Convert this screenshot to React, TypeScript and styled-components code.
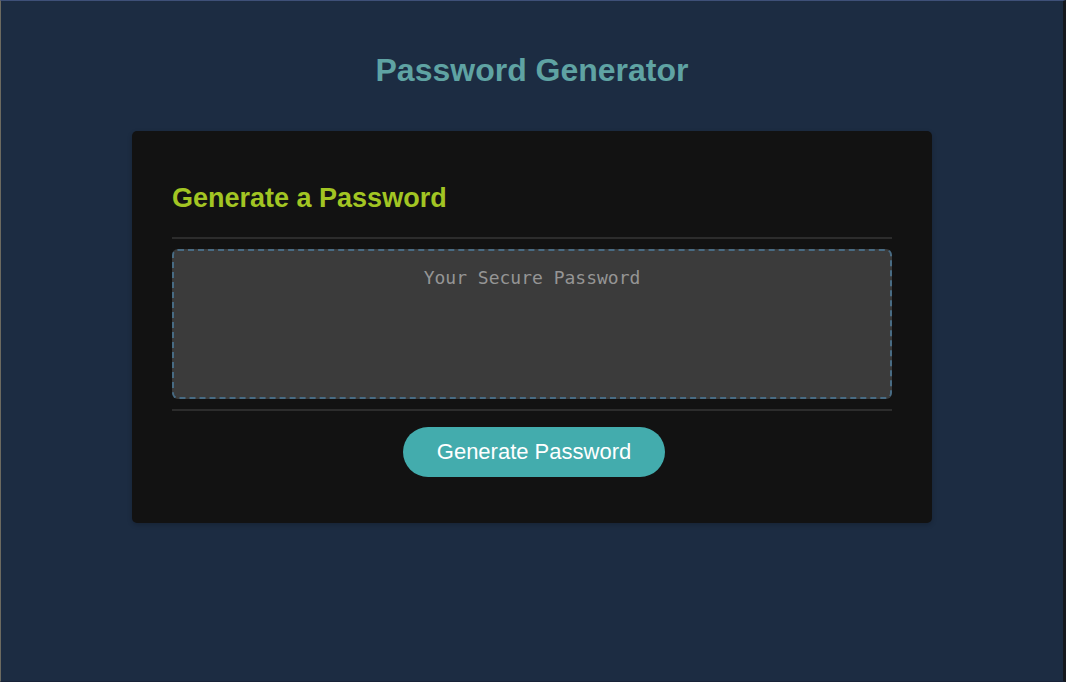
import React from "react";
import styled, { createGlobalStyle } from "styled-components";

const GlobalStyle = createGlobalStyle`
  *, *::before, *::after { box-sizing: border-box; }
  html, body { margin: 0; }
  body {
    background: #1c2c42;
    font-family: "Liberation Sans", Arial, sans-serif;
  }
`;

const Page = styled.div`
  display: flex;
  flex-direction: column;
  min-height: 100vh;
  border: 1px solid #3e5078;
  border-left-color: #6c6a60;
  border-right: 3px solid #15181d;
  border-bottom-color: #182338;
`;

const Header = styled.header`
  padding: 50px 20px 22px;
  text-align: center;
`;

const PageTitle = styled.h1`
  margin: 0;
  color: #5fa3a3;
  font-size: 32px;
  line-height: 38px;
`;

const Card = styled.main`
  width: calc(100% - 40px);
  max-width: 800px;
  margin: 20px auto;
  padding: 40px;
  border-radius: 5px;
  background: #121212;
  box-shadow: 0 2px 5px rgba(0, 0, 0, 0.2);
`;

const CardTitle = styled.h2`
  margin: 11px 0 23px;
  color: #a2c523;
  font-size: 27px;
  line-height: 32px;
`;

const CardBody = styled.div`
  padding: 10px 0;
  border: solid #2c2c2c;
  border-width: 2px 0;
`;

const PasswordBox = styled.textarea`
  display: block;
  width: 100%;
  height: 150px;
  padding: 15px 20px;
  border: 2px dashed #486b83;
  border-radius: 6px;
  resize: none;
  background: #3b3b3b;
  color: #eeeeee;
  text-align: center;
  font-family: "DejaVu Sans Mono", monospace;
  font-size: 18px;
  line-height: 24px;
  &::placeholder { color: #959595; opacity: 1; }
`;

const CardFooter = styled.div`
  display: flex;
  justify-content: center;
  padding: 16px 0 6px 4px;
`;

const GenerateButton = styled.button`
  height: 50px;
  padding: 0 34px;
  border: 0;
  border-radius: 25px;
  background: #43acad;
  color: #ffffff;
  font-family: inherit;
  font-size: 22px;
  cursor: pointer;
`;

export default function App() {
  return (
    <Page>
      <GlobalStyle />
      <Header>
        <PageTitle>Password Generator</PageTitle>
      </Header>
      <Card>
        <CardTitle>Generate a Password</CardTitle>
        <CardBody>
          <PasswordBox readOnly placeholder="Your Secure Password" aria-label="Generated Password" />
        </CardBody>
        <CardFooter>
          <GenerateButton type="button">Generate Password</GenerateButton>
        </CardFooter>
      </Card>
    </Page>
  );
}
